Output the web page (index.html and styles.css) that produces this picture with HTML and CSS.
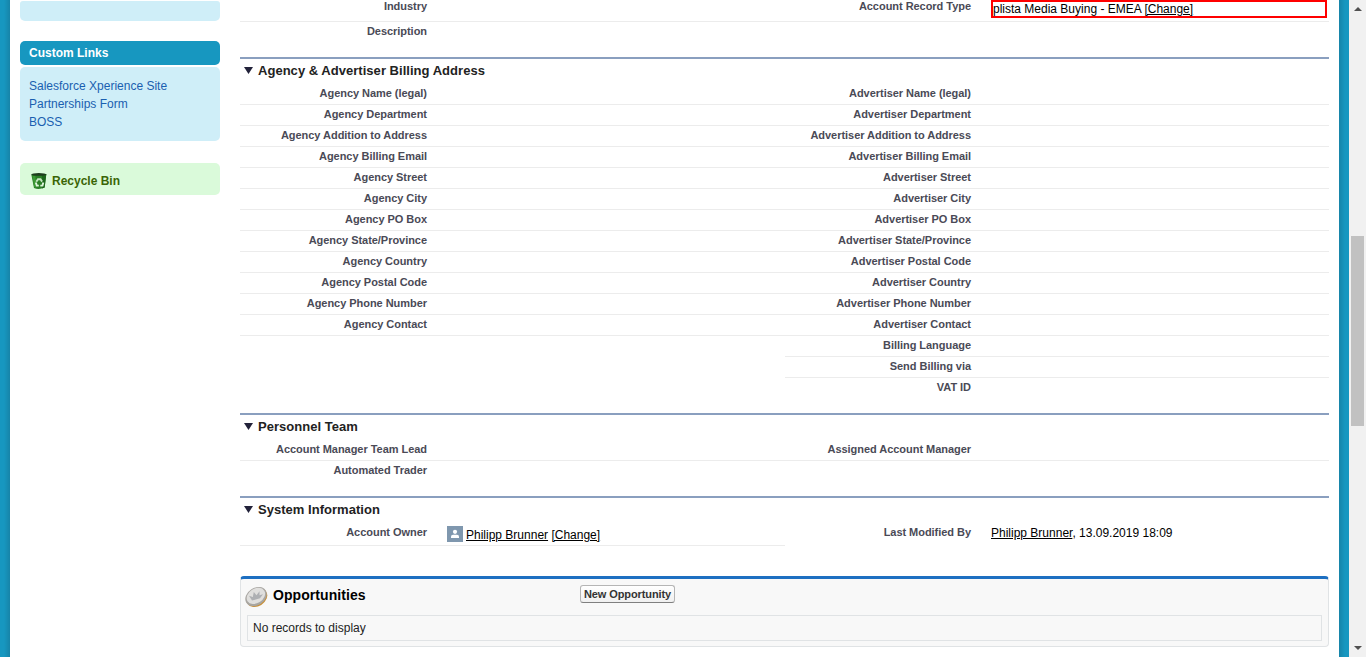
FILE: index.html
```html
<!DOCTYPE html>
<html lang="en">
<head>
<meta charset="utf-8">
<title>Account</title>
<link rel="stylesheet" href="styles.css">
</head>
<body>
<div class="window">
  <div class="page">
    <aside class="sidebar">
      <div class="module-tail"></div>
      <h2 class="module-title">Custom Links</h2>
      <ul class="module-body">
        <li><a>Salesforce Xperience Site</a></li>
        <li><a>Partnerships Form</a></li>
        <li><a>BOSS</a></li>
      </ul>
      <div class="recycle">
        <svg class="bin" width="18" height="18" viewBox="0 0 18 18">
          <path d="M1.300 2.600 16.300 2 14.600 15.500Q9 18 4 16z" fill="#2a7f26"/>
          <path d="M12 3 16.300 2 14.600 15.500 12 16.500z" fill="#1c651b"/>
          <path d="M2.500 4h2.800l1.200 11.500-2.300-.2z" fill="#3b9a35"/>
          <ellipse cx="8.800" cy="2.400" rx="7.500" ry="1.400" fill="#1d3d1d"/>
          <path d="M6.300 9.800 8 7.200h2.500l1.600 2.400" fill="none" stroke="#c4e6c0" stroke-width="1.900"/>
          <path d="M5.800 10.500 6.800 13.600h2M10.300 13.600h2.200l.8-3" fill="none" stroke="#dff5dc" stroke-width="1.900"/>
        </svg>
        <span>Recycle Bin</span>
      </div>
    </aside>
    <main class="content">
      <div class="row row-first">
        <div class="half"><span class="label">Industry</span></div>
        <div class="half"><span class="label">Account Record Type</span><span class="value highlight"><span>plista Media Buying - EMEA <a>[Change]</a></span></span></div>
      </div>
      <div class="row row-desc"><div class="half"><span class="label">Description</span></div><div class="half"></div></div>

      <section class="section billing">
        <h3><i class="tri"></i><span>Agency &amp; Advertiser Billing Address</span></h3>
        <div class="row"><div class="half"><span class="label">Agency Name (legal)</span></div><div class="half"><span class="label">Advertiser Name (legal)</span></div></div>
        <div class="row"><div class="half"><span class="label">Agency Department</span></div><div class="half"><span class="label">Advertiser Department</span></div></div>
        <div class="row"><div class="half"><span class="label">Agency Addition to Address</span></div><div class="half"><span class="label">Advertiser Addition to Address</span></div></div>
        <div class="row"><div class="half"><span class="label">Agency Billing Email</span></div><div class="half"><span class="label">Advertiser Billing Email</span></div></div>
        <div class="row"><div class="half"><span class="label">Agency Street</span></div><div class="half"><span class="label">Advertiser Street</span></div></div>
        <div class="row"><div class="half"><span class="label">Agency City</span></div><div class="half"><span class="label">Advertiser City</span></div></div>
        <div class="row"><div class="half"><span class="label">Agency PO Box</span></div><div class="half"><span class="label">Advertiser PO Box</span></div></div>
        <div class="row"><div class="half"><span class="label">Agency State/Province</span></div><div class="half"><span class="label">Advertiser State/Province</span></div></div>
        <div class="row"><div class="half"><span class="label">Agency Country</span></div><div class="half"><span class="label">Advertiser Postal Code</span></div></div>
        <div class="row"><div class="half"><span class="label">Agency Postal Code</span></div><div class="half"><span class="label">Advertiser Country</span></div></div>
        <div class="row"><div class="half"><span class="label">Agency Phone Number</span></div><div class="half"><span class="label">Advertiser Phone Number</span></div></div>
        <div class="row"><div class="half"><span class="label">Agency Contact</span></div><div class="half"><span class="label">Advertiser Contact</span></div></div>
        <div class="row"><div class="half plain"></div><div class="half"><span class="label">Billing Language</span></div></div>
        <div class="row"><div class="half plain"></div><div class="half"><span class="label">Send Billing via</span></div></div>
        <div class="row"><div class="half plain"></div><div class="half plain"><span class="label">VAT ID</span></div></div>
      </section>

      <section class="section">
        <h3><i class="tri"></i><span>Personnel Team</span></h3>
        <div class="row"><div class="half"><span class="label">Account Manager Team Lead</span></div><div class="half"><span class="label">Assigned Account Manager</span></div></div>
        <div class="row"><div class="half plain"><span class="label">Automated Trader</span></div><div class="half plain"></div></div>
      </section>

      <section class="section system">
        <h3><i class="tri"></i><span>System Information</span></h3>
        <div class="row row-owner">
          <div class="half"><span class="label">Account Owner</span><span class="value owner">
            <svg class="user" width="16" height="16" viewBox="0 0 16 16"><path fill="#7f97ae" d="M0 0h16v16H0z"/><circle cx="8" cy="5.800" r="2.100" fill="#fff"/><path fill="#fff" d="M4 12V10.500Q4 9 6 8.800h4Q12 9 12 10.500V12z"/></svg>
            <span><a>Philipp Brunner</a> <a>[Change]</a></span></span></div>
          <div class="half plain"><span class="label">Last Modified By</span><span class="value"><span><a>Philipp Brunner</a>, 13.09.2019 18:09</span></span></div>
        </div>
      </section>

      <section class="related">
        <header class="related-head">
          <svg class="coin" width="24" height="24" viewBox="0 0 24 24">
            <ellipse cx="12.700" cy="12.600" rx="11.200" ry="8.600" transform="rotate(-32 12.700 12.600)" fill="#c98f35"/>
            <ellipse cx="12" cy="11.600" rx="11.400" ry="8.700" transform="rotate(-32 12 11.600)" fill="#a8a6a2"/>
            <ellipse cx="11.900" cy="10.900" rx="9.900" ry="7.200" transform="rotate(-32 11.900 10.900)" fill="#e0dfdd"/>
            <path d="M8 15.500 5 10.800 8.800 12 9.800 7 12.500 10.300 15.500 6.300 15.500 10.200 19 9.300 16 13.300z" fill="#aeb0b3"/>
          </svg>
          <h3>Opportunities</h3>
          <button type="button">New Opportunity</button>
        </header>
        <div class="empty"><span>No records to display</span></div>
      </section>
    </main>
  </div>
  <div class="scrollbar">
    <svg width="17" height="17" viewBox="0 0 17 17"><path d="M5 11h8L9 7z" fill="#505050"/></svg>
    <div class="thumb"></div>
    <svg class="down" width="17" height="17" viewBox="0 0 17 17"><path d="M5 6h8l-4 4z" fill="#505050"/></svg>
  </div>
</div>
</body>
</html>
```
FILE: styles.css
```css
* { box-sizing: border-box; }
body { margin: 0; font-family: "Liberation Sans", Arial, sans-serif; font-size: 12px; color: #000; background: #fff; overflow: hidden; }
h2, h3, ul { margin: 0; padding: 0; }
.window { display: flex; width: 1366px; height: 657px; overflow: hidden; }
.page { display: flex; flex: 1; padding-right: 10px; border-left: 10px solid #1797c0; border-right: 10px solid #1797c0; border-image: linear-gradient(to right, #1797c0 0 4px, #1784a8 10px, #1784a8 1339px, #1797c0 1345px) 0 10; }
.sidebar { width: 230px; padding: 1px 20px 0 10px; }
.module-tail { height: 20px; border-radius: 3px 3px 5px 5px; background: #cfeef8; }
.module-title { height: 24px; margin-top: 20px; padding-left: 9px; border-radius: 5px; background: #1797c0; color: #fff; font-size: 12px; line-height: 25px; }
.module-body { height: 74px; margin-top: 2px; padding: 10px 9px; list-style: none; border-radius: 5px; background: #cfeef8; color: #1a5fb0; line-height: 18px; }
.recycle { display: flex; align-items: center; gap: 4px; height: 32px; margin-top: 22px; padding: 4px 10px 0; border-radius: 5px; background: #dafada; color: #3a6506; font-weight: bold; }
.bin { margin-top: -1px; }
.content { width: 1089px; }
.row { display: flex; height: 21px; }
.half { display: flex; width: 545px; border-bottom: 1px solid #ececec; }
.half + .half { width: 544px; }
.label { width: 187px; text-align: right; font-size: 11px; font-weight: bold; line-height: 18px; letter-spacing: -0.04px; color: #4a4a56; white-space: nowrap; }
.half + .half .label { width: 186px; }
.value { margin-left: 20px; line-height: 18px; white-space: nowrap; }
.value a { text-decoration: underline; }
.plain { border-bottom-color: transparent; }
.row-first { height: 22px; }
.row-first .label { line-height: 13px; }
.highlight { width: 336px; height: 18px; border: 2px solid #f00; line-height: 14px; }
.row-desc { height: 35px; }
.row-desc .half { border: 0; }
.section { border-top: 2px solid #8a9fbf; padding-bottom: 14px; }
.section h3 { display: flex; align-items: center; height: 25px; padding: 0 0 2px 4px; gap: 5px; font-size: 13px; line-height: 23px; letter-spacing: 0.03px; color: #222; }
.tri { width: 9px; height: 7px; background: #22223a; clip-path: polygon(0 0, 100% 0, 50% 100%); }
.row-owner { height: 23px; }
.row-owner .value { line-height: 20px; }
.owner { display: flex; align-items: flex-start; gap: 3px; padding-top: 2px; }
.user { margin-top: 1px; }
.system { padding-bottom: 30px; }
.related { height: 71px; padding: 0 6px; border: 1px solid #e0e3e5; border-top: 3px solid #1d6fc1; border-radius: 4px; background: #f8f8f8; }
.related-head { display: flex; align-items: center; height: 36px; }
.coin { margin: -1px 5px 0 -3px; }
.related-head h3 { width: 307px; padding-bottom: 4px; font-size: 14px; line-height: 32px; letter-spacing: 0.07px; }
.related button { width: 95px; height: 18px; margin-bottom: 6px; padding: 0; border: 1px solid #b5b5b5; border-bottom-color: #7f7f7f; border-radius: 3px; background: linear-gradient(#fff, #f0f0f0); color: #333; font: bold 11px "Liberation Sans", Arial, sans-serif; letter-spacing: -0.1px; white-space: nowrap; }
.empty { height: 26px; padding-left: 5px; border: 1px solid #e0e3e5; line-height: 25px; color: #222; }
.scrollbar { display: flex; flex-direction: column; align-items: center; width: 17px; background: #f1f1f1; }
.thumb { width: 13px; height: 190px; margin-top: 219px; background: #c1c1c1; }
.down { margin-top: auto; }
```
